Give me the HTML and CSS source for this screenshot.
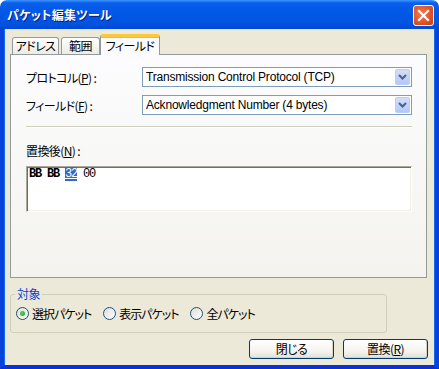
FILE: index.html
```html
<!DOCTYPE html>
<html lang="ja">
<head>
  <meta charset="UTF-8">
  <title>パケット編集ツール</title>
  <link rel="stylesheet" href="styles.css">
</head>
<body>
  <div class="window">
    <div class="titlebar">
      <span class="title">パケット編集ツール</span>
      <span class="close-btn">
        <svg width="13" height="13" viewBox="0 0 13 13">
          <path d="M2 2 L11 11 M11 2 L2 11" stroke="#ffffff" stroke-width="2.2" stroke-linecap="square"/>
        </svg>
      </span>
    </div>

    <div class="client">
      <div class="tabs">
        <div class="tab tab-address">アドレス</div>
        <div class="tab tab-range">範囲</div>
        <div class="tab tab-active">フィールド</div>
      </div>

      <div class="panel">
        <div class="row">
          <label class="field-label">プロトコル(<u>P</u>) :</label>
          <div class="combo">
            <span class="combo-text">Transmission Control Protocol (TCP)</span>
            <span class="combo-btn">
              <svg width="9" height="6" viewBox="0 0 9 6">
                <path d="M1 1 L4.5 4.5 L8 1" fill="none" stroke="#4d6185" stroke-width="2"/>
              </svg>
            </span>
          </div>
        </div>
        <div class="row">
          <label class="field-label">フィールド(<u>F</u>) :</label>
          <div class="combo">
            <span class="combo-text">Acknowledgment Number (4 bytes)</span>
            <span class="combo-btn">
              <svg width="9" height="6" viewBox="0 0 9 6">
                <path d="M1 1 L4.5 4.5 L8 1" fill="none" stroke="#4d6185" stroke-width="2"/>
              </svg>
            </span>
          </div>
        </div>

        <div class="separator"></div>

        <div class="replace-label">置換後(<u>N</u>) :</div>
        <div class="hexbox">
          <b>BB BB</b> <span class="sel">32</span> 00
        </div>
      </div>

      <fieldset class="target">
        <legend>対象</legend>
        <div class="radios">
          <label class="radio"><span class="dot checked"></span>選択パケット</label>
          <label class="radio"><span class="dot"></span>表示パケット</label>
          <label class="radio"><span class="dot"></span>全パケット</label>
        </div>
      </fieldset>

      <div class="buttons">
        <button class="btn">閉じる</button>
        <button class="btn">置換(<u>R</u>)</button>
      </div>
    </div>
  </div>
</body>
</html>
```

FILE: styles.css
```css
body {
  margin: 0;
  font-family: "Noto Sans CJK JP", "Liberation Sans", sans-serif;
  font-size: 12px;
  font-feature-settings: "palt";
  letter-spacing: -0.6px;
  color: #000;
  background: #ffffff;
}

.window {
  width: 439px;
  height: 369px;
}

.titlebar {
  height: 29px;
  box-sizing: border-box;
  border-radius: 7px 7px 0 0;
  background: linear-gradient(to bottom, #3d95ff 0, #0a5eeb 3px, #0058e6 45%, #0052e0 85%, #0046d0 100%);
  display: flex;
  align-items: center;
  justify-content: space-between;
  padding: 0 5px 0 7px;
}

.title {
  color: #ffffff;
  font-weight: bold;
  font-size: 12px;
  letter-spacing: 0.3px;
  text-shadow: 1px 1px 0 #0a1883;
}

.close-btn {
  width: 19px;
  height: 19px;
  border: 1px solid #ffffff;
  border-radius: 3px;
  background: radial-gradient(circle at 40% 40%, #ee7a55 0, #e0552c 55%, #c23c12 100%);
  display: flex;
  align-items: center;
  justify-content: center;
  margin-top: 1px;
}

.client {
  height: 340px;
  box-sizing: border-box;
  background: #ece9d8;
  border-left: 4px solid #0842db;
  border-right: 4px solid #0842db;
  border-bottom: 4px solid #0831d9;
  box-shadow: inset 1px 0 0 #166aee, inset -1px 0 0 #166aee;
  padding-top: 5px;
}

/* tabs */
.tabs {
  display: flex;
  align-items: flex-end;
  height: 20px;
  margin-left: 8px;
  position: relative;
  z-index: 1;
}

.tab {
  height: 17px;
  box-sizing: border-box;
  border: 1px solid #919b9c;
  border-bottom: none;
  border-radius: 3px 3px 0 0;
  background: linear-gradient(to bottom, #ffffff, #ecebe6);
  text-align: center;
  line-height: 16px;
}

.tab-address {
  width: 47px;
}

.tab-range {
  width: 39px;
  margin-left: 2px;
}

.tab-active {
  width: 60px;
  height: 21px;
  margin-bottom: -1px;
  background: #fcfcfe;
  border-top: 3px solid #ffc83c;
  box-shadow: inset 0 1px 0 #f7b340;
  line-height: 17px;
}

.panel {
  width: 417px;
  height: 224px;
  margin-left: 6px;
  box-sizing: border-box;
  border: 1px solid #919b9c;
  background: linear-gradient(to bottom, #fcfcfe, #f4f3ee);
  padding: 12px 14px 0 15px;
}

.row {
  display: flex;
  align-items: center;
  margin-bottom: 8px;
}

.field-label {
  width: 116px;
}

.combo {
  flex: 1;
  height: 20px;
  box-sizing: border-box;
  border: 1px solid #7f9db9;
  background: #ffffff;
  display: flex;
  align-items: center;
  justify-content: space-between;
  padding: 0 1px 0 3px;
}

.combo-text {
  font-family: "Liberation Sans", "Noto Sans CJK JP", sans-serif;
  font-size: 12px;
  letter-spacing: -0.2px;
}

.combo-btn {
  width: 15px;
  height: 16px;
  box-sizing: border-box;
  border: 1px solid #b9cdf8;
  border-radius: 2px;
  background: linear-gradient(to bottom, #d2defc, #b4c8f7);
  display: flex;
  align-items: center;
  justify-content: center;
}

.separator {
  height: 0;
  border-top: 1px solid #d0d0bf;
  border-bottom: 1px solid #ffffff;
  margin-top: 11px;
}

.replace-label {
  line-height: 14px;
  margin-top: 16px;
}

.hexbox {
  height: 46px;
  box-sizing: border-box;
  margin-top: 8px;
  border-top: 1px solid #aca899;
  border-left: 1px solid #aca899;
  border-right: 1px solid #ffffff;
  border-bottom: 1px solid #ffffff;
  box-shadow: inset 1px 1px 0 #716f64, inset -1px -1px 0 #f1efe2;
  background: #ffffff;
  padding: 1px 2px;
  font-family: "Liberation Mono", monospace;
  font-size: 12px;
  letter-spacing: -1.2px;
  line-height: 13px;
}

.hexbox .sel {
  background: #316ac5;
  color: #ffffff;
  text-decoration: underline;
}

/* target group */
.target {
  width: 377px;
  height: 46px;
  box-sizing: border-box;
  margin: 9px 0 0 6px;
  padding: 0 4px;
  border: 1px solid #d0d0bf;
  border-radius: 3px;
}

.target legend {
  color: #0046d5;
  padding: 0 2px;
  line-height: 14px;
}

.radios {
  display: flex;
  align-items: center;
  gap: 12px;
  margin-top: 4px;
  padding-left: 1px;
}

.radio {
  display: flex;
  align-items: center;
  gap: 3px;
  letter-spacing: -1px;
}

.dot {
  width: 13px;
  height: 13px;
  box-sizing: border-box;
  border: 1px solid #1c5180;
  border-radius: 50%;
  background: linear-gradient(135deg, #dcdcd7, #ffffff);
  display: flex;
  align-items: center;
  justify-content: center;
}

.dot.checked::after {
  content: "";
  width: 5px;
  height: 5px;
  border-radius: 50%;
  background: radial-gradient(circle at 40% 40%, #55d651, #21a121);
}

.buttons {
  display: flex;
  justify-content: flex-end;
  gap: 9px;
  margin: 6px 7px 0 0;
}

.btn {
  width: 85px;
  height: 20px;
  font-family: inherit;
  font-size: 12px;
  font-feature-settings: "palt";
  letter-spacing: -0.6px;
  border: 1px solid #003c74;
  border-radius: 3px;
  background: linear-gradient(to bottom, #ffffff 0, #f5f4ef 60%, #e3e1d7 100%);
  box-shadow: inset -1px -1px 0 #d6d0c5;
  padding: 0;
  line-height: 16px;
}
```
